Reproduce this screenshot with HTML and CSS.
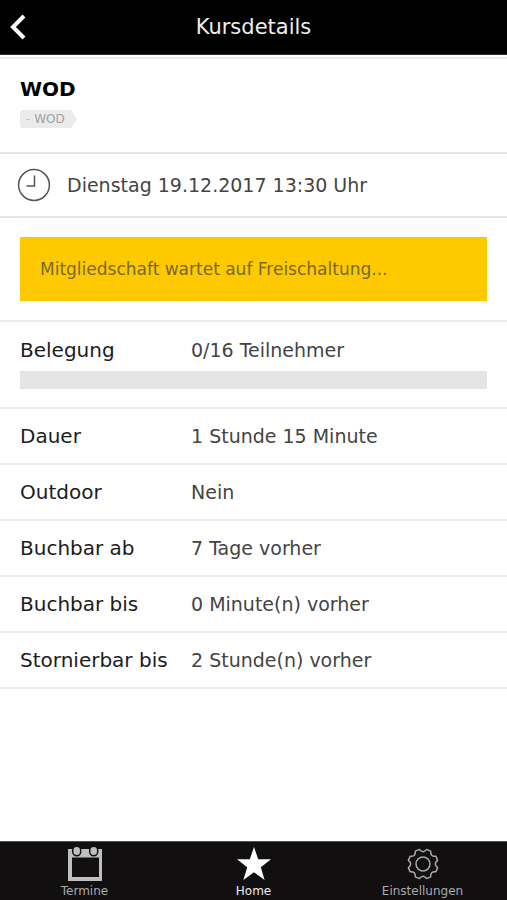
FILE: index.html
```html
<!DOCTYPE html>
<html lang="de">
<head>
  <meta charset="utf-8">
  <meta name="viewport" content="width=device-width, initial-scale=1">
  <title>Kursdetails</title>
  <link rel="stylesheet" href="styles.css">
</head>
<body>
  <header class="topbar">
    <button class="back" type="button" aria-label="Zurück">
      <svg viewBox="0 0 16 26" width="16" height="26" aria-hidden="true"><path d="M14 2 3 13l11 11"/></svg>
    </button>
    <h1 class="topbar-title">Kursdetails</h1>
  </header>

  <main class="content">
    <section class="course">
      <h2 class="course-name">WOD</h2>
      <span class="tag"><span class="tag-dash">-</span> WOD</span>
    </section>

    <section class="date">
      <svg class="clock" viewBox="0 0 34 34" width="34" height="34" aria-hidden="true">
        <circle cx="17" cy="17" r="15.4"/>
        <path d="M17.5 7.5v10.5h-8"/>
      </svg>
      <span>Dienstag 19.12.2017 13:30 Uhr</span>
    </section>

    <section class="notice">
      <p class="notice-box">Mitgliedschaft wartet auf Freischaltung...</p>
    </section>

    <dl class="details">
      <div class="row row-usage">
        <dt>Belegung</dt>
        <dd>0/16 Teilnehmer</dd>
        <dd class="usage"><progress class="usage-bar" value="0" max="16" aria-label="Belegung"></progress></dd>
      </div>
      <div class="row"><dt>Dauer</dt><dd>1 Stunde 15 Minute</dd></div>
      <div class="row"><dt>Outdoor</dt><dd>Nein</dd></div>
      <div class="row"><dt>Buchbar ab</dt><dd>7 Tage vorher</dd></div>
      <div class="row"><dt>Buchbar bis</dt><dd>0 Minute(n) vorher</dd></div>
      <div class="row"><dt>Stornierbar bis</dt><dd>2 Stunde(n) vorher</dd></div>
    </dl>
  </main>

  <nav class="tabs">
    <a class="tab" href="#termine">
      <svg viewBox="0 0 36 36" width="36" height="36" aria-hidden="true">
        <path class="fill" fill-rule="evenodd" d="M1 3h34v32H1zM5 11.500v19.500h27V11.500z"/>
        <rect class="ring" x="5.700" y="0.300" width="8" height="9.500" rx="4"/>
        <rect class="ring" x="22.700" y="0.300" width="8" height="9.500" rx="4"/>
      </svg>
      <span>Termine</span>
    </a>
    <a class="tab tab-active" href="#home" aria-current="page">
      <svg viewBox="0 0 36 36" width="36" height="36" aria-hidden="true">
        <path class="fill" d="M18 1l4.200 12.300H35L24.800 21.200 28.600 34 18 26.300 7.400 34l3.800-12.800L1 13.300h12.800z"/>
      </svg>
      <span>Home</span>
    </a>
    <a class="tab" href="#einstellungen">
      <svg viewBox="-18 -18 36 36" width="36" height="36" aria-hidden="true">
        <path class="line" d="M3.600-14.600L7.700-12.900Q7.100-7.100 12.900-7.700L14.600-3.600Q10 0 14.600 3.600L12.900 7.700Q7.100 7.100 7.700 12.900L3.600 14.600Q0 10-3.600 14.600L-7.700 12.900Q-7.100 7.100-12.900 7.700L-14.600 3.600Q-10 0-14.600-3.600L-12.900-7.700Q-7.100-7.100-7.700-12.900L-3.600-14.600Q0-10 3.600-14.600Z"/>
        <circle class="line" r="7"/>
      </svg>
      <span>Einstellungen</span>
    </a>
  </nav>
</body>
</html>
```
FILE: styles.css
```css
* {
  box-sizing: border-box;
}

body {
  display: flex;
  flex-direction: column;
  min-height: 100vh;
  margin: 0;
  background: #fff;
  color: #444;
  font-family: "DejaVu Sans", sans-serif;
  font-size: 19px;
  line-height: 24px;
}

h1,
h2,
p,
dl,
dd {
  margin: 0;
}

.topbar {
  display: grid;
  grid-template-columns: 48px 1fr 48px;
  align-items: center;
  height: 55px;
  background: #000;
  border-bottom: 1px solid #333;
}

.back {
  display: flex;
  padding: 8px 10px;
  border: 0;
  background: none;
}

.back path {
  fill: none;
  stroke: #fff;
  stroke-width: 4;
}

.topbar-title {
  color: #eee;
  font-size: 21px;
  font-weight: 400;
  text-align: center;
}

.content {
  flex: 1;
  margin-top: 2px;
  border-top: 2px solid #ebebeb;
}

.course {
  padding: 18px 20px 24px;
  border-bottom: 2px solid #e6e6e6;
}

.course-name {
  color: #000;
  font-size: 20px;
  margin-bottom: 9px;
}

.tag {
  display: block;
  width: 57px;
  padding-left: 6px;
  background: #ebebeb;
  border-radius: 3px;
  clip-path: polygon(0 0, 51px 0, 100% 50%, 51px 100%, 0 100%);
  color: #a2a2a2;
  font-size: 12px;
  line-height: 18px;
}

.tag-dash {
  color: #c4c4c4;
}

.date {
  display: flex;
  align-items: center;
  gap: 16px;
  padding: 14px 17px;
  border-bottom: 2px solid #e6e6e6;
}

.clock {
  fill: none;
  stroke: #555;
  stroke-width: 1.5;
}

.notice {
  padding: 19px 20px;
  border-bottom: 2px solid #ebebeb;
}

.notice-box {
  padding: 20px;
  background: #ffc900;
  color: #75693a;
  font-size: 17px;
}

.row {
  display: grid;
  grid-template-columns: 171px 1fr;
  align-items: baseline;
  padding: 15px 20px;
  border-bottom: 2px solid #ebebeb;
}

.row dt {
  color: #1c1c1c;
  font-size: 20px;
}

.row-usage {
  padding: 16px 20px 18px;
}

.usage {
  grid-column: 1 / -1;
  margin-top: 9px;
}

.usage-bar {
  display: block;
  width: 100%;
  height: 18px;
  appearance: none;
  border: 0;
  background: #e5e5e5;
}

.usage-bar::-webkit-progress-bar {
  background: #e5e5e5;
}

.usage-bar::-webkit-progress-value {
  background: #ffc900;
}

.tabs {
  display: grid;
  grid-template-columns: repeat(3, 1fr);
  background: #120f10;
  border-top: 1px solid #555;
}

.tab {
  display: flex;
  flex-direction: column;
  align-items: center;
  gap: 1px;
  padding: 4px 0 1px;
  color: #aaa;
  font-size: 12px;
  line-height: 16px;
  text-decoration: none;
}

.tab-active {
  color: #eee;
}

.fill {
  fill: #c0bfc0;
}

.tab-active .fill {
  fill: #fff;
}

.ring {
  fill: #c0bfc0;
  stroke: #120f10;
  stroke-width: 1.5;
}

.line {
  fill: none;
  stroke: #aaa;
  stroke-width: 1.5;
  stroke-linejoin: round;
}
```
